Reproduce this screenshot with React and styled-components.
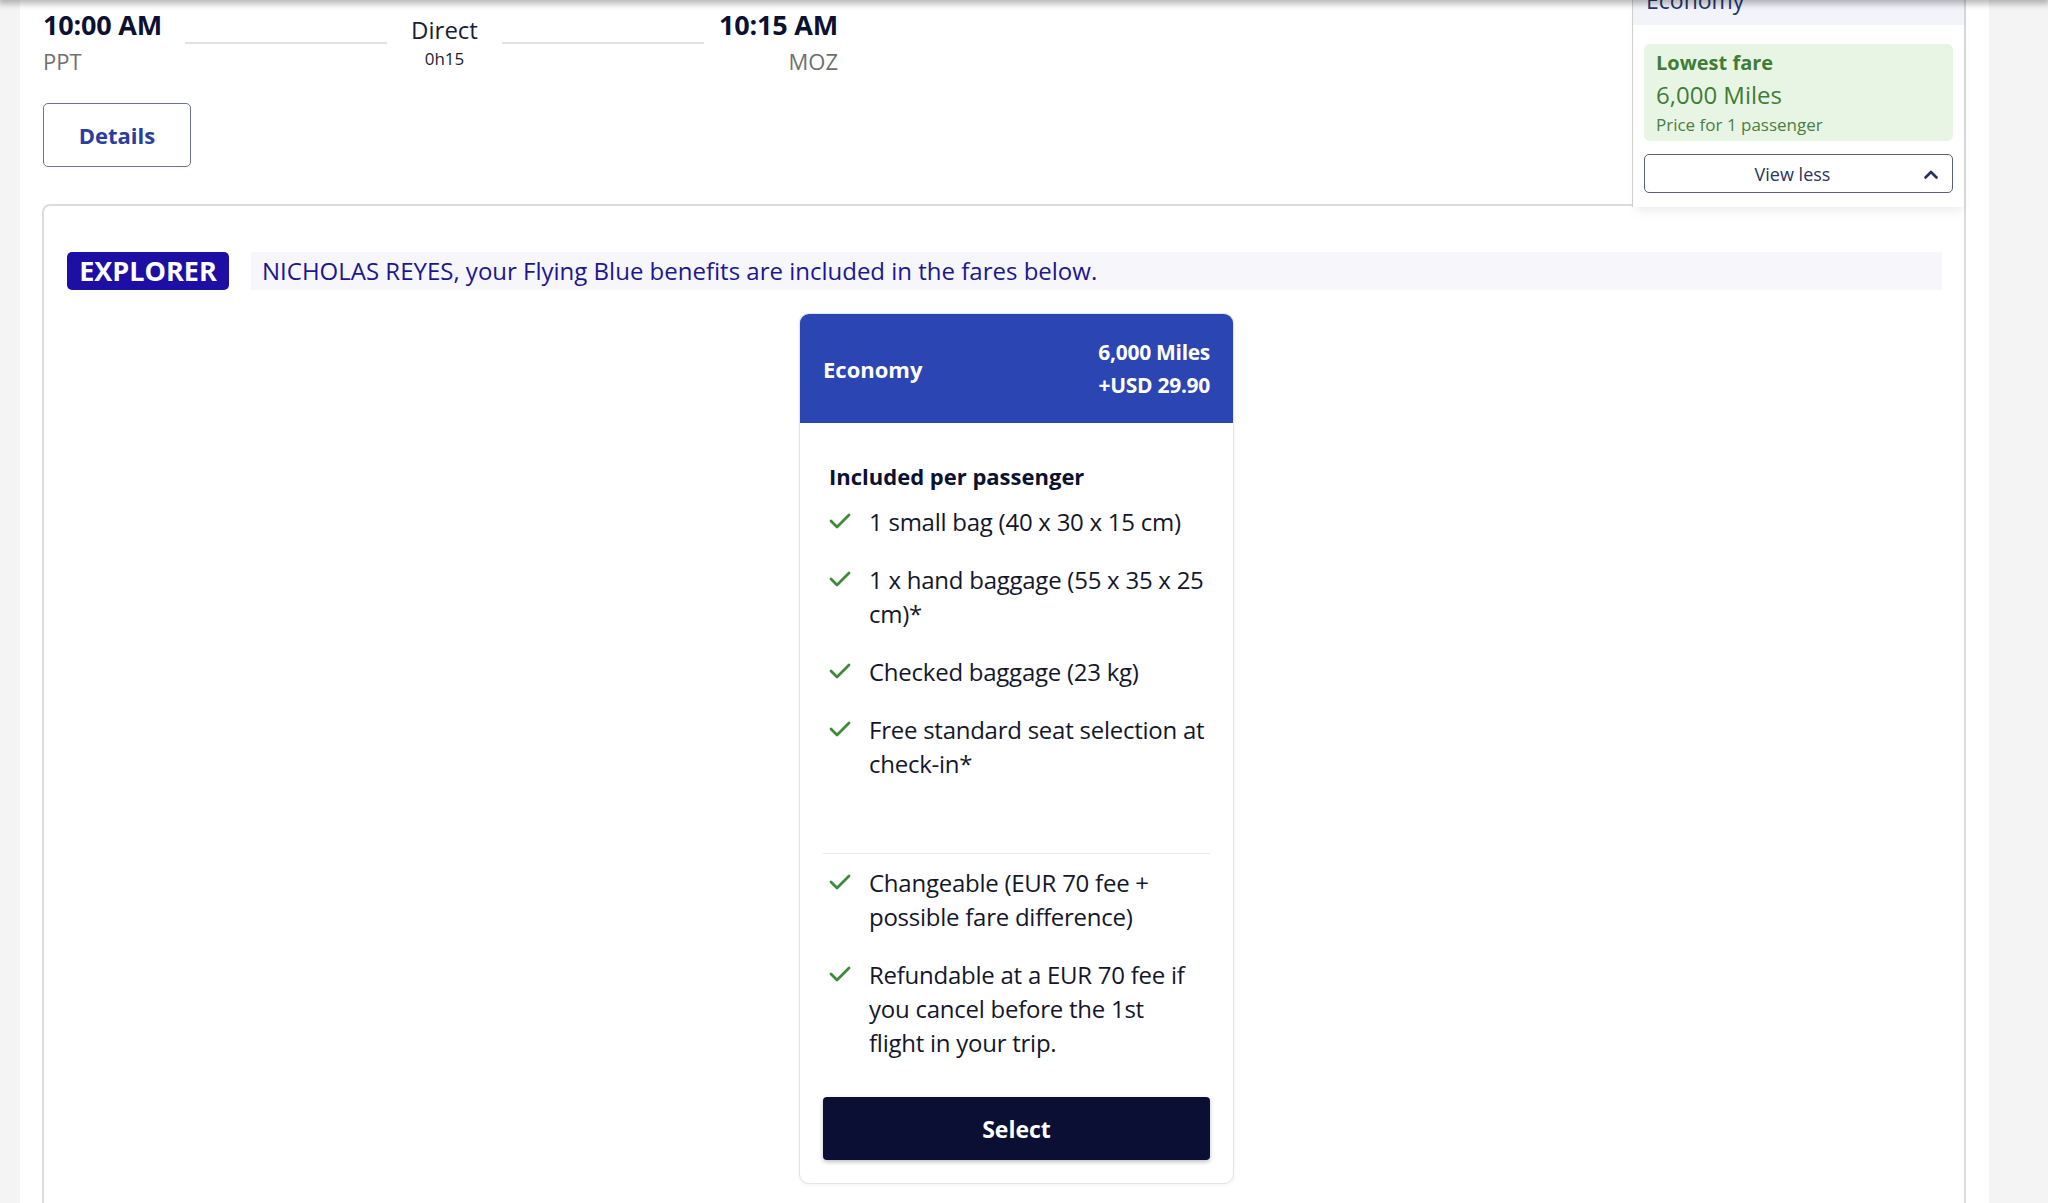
import React from 'react'
import styled, { createGlobalStyle } from 'styled-components'

const GlobalStyle = createGlobalStyle`
    body {
        margin: 0;
        font-family: "Open Sans", "Liberation Sans", sans-serif;
        background: #f4f4f4;
        color: #0b1130;
    }
    * { box-sizing: border-box; }
`

const included = [
    '1 small bag (40 x 30 x 15 cm)',
    '1 x hand baggage (55 x 35 x 25 cm)*',
    'Checked baggage (23 kg)',
    'Free standard seat selection at check-in*',
]

// non-breaking space keeps "flight in" together, as in the original wrap
const conditions = [
    'Changeable (EUR 70 fee + possible fare difference)',
    'Refundable at a EUR 70 fee if you cancel before the 1st flight\u00a0in your trip.',
]

function Check() {
    return (
        <CheckIcon viewBox="0 0 22 16">
            <polyline points="2,8 8,14 20,2" fill="none" stroke="#3c8a3a" strokeWidth="2.8" strokeLinecap="round" strokeLinejoin="round" />
        </CheckIcon>
    )
}

function App() {
    return (
        <Page>
            <GlobalStyle />
            <HeaderShadow />
            <Main>
                <TopRow>
                    <FlightInfo>
                        <Times>
                            <TimeCol>
                                <Time>10:00 AM</Time>
                                <Code>PPT</Code>
                            </TimeCol>
                            <RouteLine />
                            <Middle>
                                <Direct>Direct</Direct>
                                <Duration>0h15</Duration>
                            </Middle>
                            <RouteLine />
                            <TimeCol right>
                                <Time>10:15 AM</Time>
                                <Code>MOZ</Code>
                            </TimeCol>
                        </Times>
                        <DetailsButton>Details</DetailsButton>
                    </FlightInfo>
                    <FareColumn>
                        <FareColumnHead>
                            <span>Economy</span>
                        </FareColumnHead>
                        <LowestFare>
                            <LowestTitle>Lowest fare</LowestTitle>
                            <LowestMiles>6,000 Miles</LowestMiles>
                            <LowestNote>Price for 1 passenger</LowestNote>
                        </LowestFare>
                        <ViewLess>
                            <span>View less</span>
                            <Chevron viewBox="0 0 14 9">
                                <polyline points="1.5,7.5 7,2 12.5,7.5" fill="none" stroke="#24305e" strokeWidth="2.6" strokeLinecap="round" strokeLinejoin="round" />
                            </Chevron>
                        </ViewLess>
                    </FareColumn>
                </TopRow>
                <Panel>
                    <BenefitRow>
                        <Badge>Explorer</Badge>
                        <Message>NICHOLAS REYES, your Flying Blue benefits are included in the fares below.</Message>
                    </BenefitRow>
                    <FareRow>
                        <FareCard>
                            <CardHead>
                                <CabinName>Economy</CabinName>
                                <Price>
                                    <div>6,000 Miles</div>
                                    <div>+USD 29.90</div>
                                </Price>
                            </CardHead>
                            <CardBody>
                                <Section tall>
                                    <SectionTitle>Included per passenger</SectionTitle>
                                    <List>
                                        {included.map((item) => (
                                            <Item key={item}>
                                                <Check />
                                                <span>{item}</span>
                                            </Item>
                                        ))}
                                    </List>
                                </Section>
                                <Divider />
                                <Section>
                                    <List>
                                        {conditions.map((item) => (
                                            <Item key={item}>
                                                <Check />
                                                <span>{item}</span>
                                            </Item>
                                        ))}
                                    </List>
                                </Section>
                                <SelectButton>Select</SelectButton>
                            </CardBody>
                        </FareCard>
                    </FareRow>
                </Panel>
            </Main>
        </Page>
    )
}

export default App

const Page = styled.div`
    display: flex;
    min-height: 100vh;
    padding: 0 59px 0 20px;
    background: #f4f4f4;
`

const HeaderShadow = styled.div`
    position: fixed;
    top: -6px;
    left: 0;
    right: 0;
    height: 6px;
    background: #e9e9e9;
    box-shadow: 0 2px 6px 2px rgba(0, 0, 0, 0.28);
    z-index: 5;
`

const Main = styled.div`
    flex: 1;
    background: #ffffff;
    padding: 0 23px 0 22px;
    min-height: 1203px;
`

const TopRow = styled.div`
    display: flex;
    align-items: stretch;
`

const FlightInfo = styled.div`
    flex: 1;
    padding: 10px 0 0 1px;
`

const Times = styled.div`
    display: flex;
    align-items: flex-start;
    width: 795px;
`

const TimeCol = styled.div`
    width: ${(p) => (p.right ? '134px' : '142px')};
    text-align: ${(p) => (p.right ? 'right' : 'left')};
`

const Time = styled.div`
    font-size: 27px;
    font-weight: 700;
    line-height: 30px;
    color: #0b1130;
    letter-spacing: -0.2px;
    white-space: nowrap;
`

const Code = styled.div`
    margin-top: 7px;
    font-size: 22px;
    line-height: 28px;
    color: #6f6f6f;
`

const RouteLine = styled.div`
    flex: 1;
    height: 2px;
    margin-top: 32px;
    background: #e2e2e2;
`

const Middle = styled.div`
    width: 115px;
    text-align: center;
`

const Direct = styled.div`
    margin-top: 6px;
    font-size: 24px;
    line-height: 28px;
    color: #1a1d33;
`

const Duration = styled.div`
    margin-top: 4px;
    font-size: 17px;
    line-height: 22px;
    color: #1a1d33;
`

const DetailsButton = styled.button`
    margin-top: 28px;
    width: 148px;
    height: 64px;
    border: 1px solid #6c7390;
    border-radius: 5px;
    background: #ffffff;
    font-family: inherit;
    font-size: 22px;
    font-weight: 700;
    color: #2b3d9e;
    cursor: pointer;
`

const FareColumn = styled.div`
    position: relative;
    z-index: 1;
    width: 334px;
    margin-bottom: -3px;
    padding-bottom: 14px;
    background: #ffffff;
    border-left: 1px solid #cfcfcf;
    border-right: 2px solid #d6d6d6;
    box-shadow: 0 8px 10px -4px rgba(0, 0, 0, 0.08);
`

const FareColumnHead = styled.div`
    height: 25px;
    overflow: hidden;
    display: flex;
    align-items: flex-end;
    padding: 0 0 13px 13px;
    background: #f3f4f9;

    span {
        font-size: 23px;
        line-height: 1;
        color: #263470;
    }
`

const LowestFare = styled.div`
    margin: 19px 11px 0;
    padding: 7px 12px 5px;
    border-radius: 6px;
    background: #e8f5e5;
    color: #3f7d35;
`

const LowestTitle = styled.div`
    font-size: 20px;
    font-weight: 700;
    line-height: 24px;
`

const LowestMiles = styled.div`
    margin-top: 5px;
    font-size: 24px;
    line-height: 30px;
`

const LowestNote = styled.div`
    margin-top: 4px;
    font-size: 17px;
    line-height: 22px;
    color: #4a7f40;
`

const ViewLess = styled.button`
    position: relative;
    display: flex;
    align-items: center;
    justify-content: center;
    width: calc(100% - 22px);
    height: 39px;
    margin: 13px 11px 0;
    padding: 0 12px 0 0;
    border: 1px solid #5a6078;
    border-radius: 5px;
    background: #ffffff;
    font-family: inherit;
    font-size: 18px;
    color: #2a3560;
    cursor: pointer;
`

const Chevron = styled.svg`
    position: absolute;
    right: 14px;
    top: 15px;
    width: 14px;
    height: 9px;
`

const Panel = styled.div`
    min-height: 1000px;
    padding: 46px 22px 0 23px;
    border: 2px solid #dcdcdc;
    border-bottom: none;
    border-top-left-radius: 8px;
`

const BenefitRow = styled.div`
    display: flex;
    gap: 22px;
    height: 38px;
`

const Badge = styled.div`
    width: 162px;
    border-radius: 5px;
    background: #1d0fa3;
    color: #ffffff;
    font-size: 27px;
    font-weight: 700;
    line-height: 38px;
    text-align: center;
    text-transform: uppercase;
`

const Message = styled.div`
    flex: 1;
    padding-left: 11px;
    background: #f6f6fb;
    color: #20168f;
    font-size: 24px;
    line-height: 38px;
`

const FareRow = styled.div`
    display: flex;
    justify-content: center;
    margin-top: 23px;
    padding-left: 24px;
`

const FareCard = styled.div`
    width: 435px;
    border: 1px solid #e3e3e3;
    border-radius: 10px;
    overflow: hidden;
    box-shadow: 0 1px 4px rgba(0, 0, 0, 0.06);
    background: #ffffff;
`

const CardHead = styled.div`
    display: flex;
    align-items: center;
    justify-content: space-between;
    height: 109px;
    padding: 0 23px;
    background: #2b45b2;
    color: #ffffff;
`

const CabinName = styled.div`
    font-size: 22px;
    font-weight: 700;
`

const Price = styled.div`
    text-align: right;
    font-size: 21px;
    font-weight: 700;
    line-height: 33px;
    letter-spacing: -0.3px;
`

const CardBody = styled.div`
    padding: 39px 23px 23px;
`

const Section = styled.div`
    padding-left: 6px;
    min-height: ${(p) => (p.tall ? '391px' : 'auto')};
`

const SectionTitle = styled.div`
    font-size: 22px;
    font-weight: 700;
    line-height: 28px;
    color: #0b1130;
`

const List = styled.ul`
    list-style: none;
    margin: 15px 0 0;
    padding: 0;
    display: flex;
    flex-direction: column;
    gap: 24px;
`

const Item = styled.li`
    display: flex;
    align-items: flex-start;
    gap: 18px;
    font-size: 24px;
    line-height: 34px;
    letter-spacing: -0.25px;
    color: #14172a;
`

const CheckIcon = styled.svg`
    flex: none;
    width: 22px;
    height: 16px;
    margin-top: 8px;
`

const Divider = styled.div`
    height: 1px;
    background: #e8e8e8;
    margin-bottom: -3px;
`

const SelectButton = styled.button`
    display: block;
    width: 100%;
    height: 63px;
    margin-top: 37px;
    border: none;
    border-radius: 4px;
    background: #0a0f33;
    color: #ffffff;
    font-family: inherit;
    font-size: 23px;
    font-weight: 700;
    box-shadow: 0 2px 4px rgba(0, 0, 0, 0.25);
    cursor: pointer;
`
